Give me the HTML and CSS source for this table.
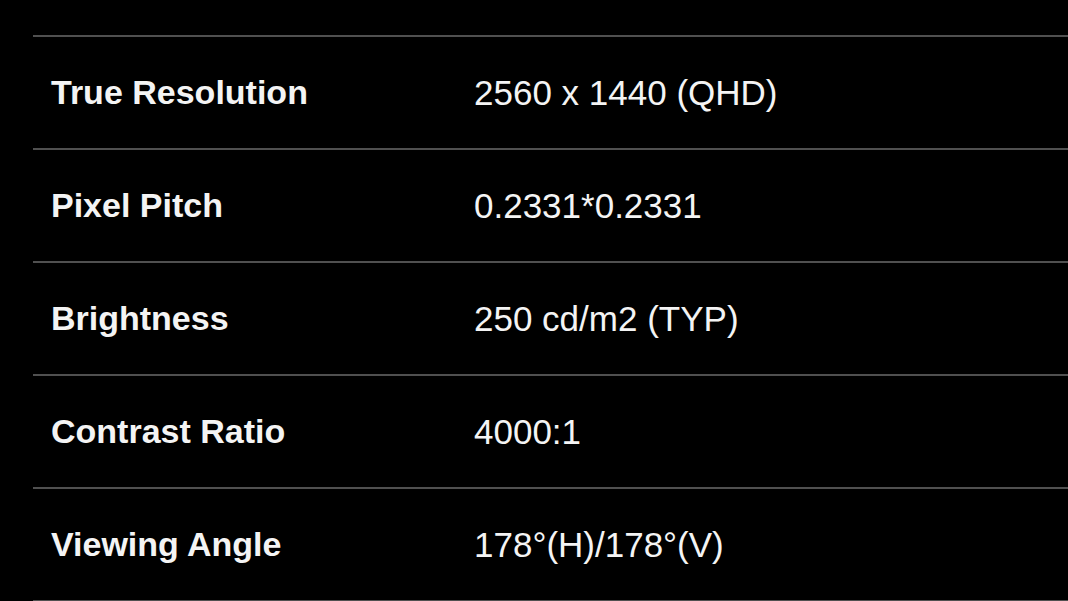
FILE: index.html
```html
<!DOCTYPE html>
<html lang="en">
<head>
<meta charset="utf-8">
<title>Specifications</title>
<link rel="stylesheet" href="styles.css">
</head>
<body>
<div class="specs">
  <div class="row"><div class="label">True Resolution</div><div class="value">2560 x 1440 (QHD)</div></div>
  <div class="row"><div class="label">Pixel Pitch</div><div class="value">0.2331*0.2331</div></div>
  <div class="row"><div class="label">Brightness</div><div class="value">250 cd/m2 (TYP)</div></div>
  <div class="row"><div class="label">Contrast Ratio</div><div class="value">4000:1</div></div>
  <div class="row"><div class="label">Viewing Angle</div><div class="value">178°(H)/178°(V)</div></div>
  <div class="row end"></div>
</div>
</body>
</html>
```
FILE: styles.css
```css
html, body {
  margin: 0;
  padding: 0;
  background: #000;
  overflow: hidden;
}
body {
  width: 1068px;
  height: 601px;
  font-family: "Liberation Sans", Arial, sans-serif;
  color: #f4f4f4;
}
.specs {
  padding-top: 35px;
  margin-left: 33px;
  display: flex;
  flex-direction: column;
}
.row {
  height: 111px;
  border-top: 2px solid #505050;
  display: flex;
  align-items: center;
}
.row.end {
  height: 0;
}
.label {
  width: 423px;
  padding-left: 18px;
  font-weight: bold;
  font-size: 34px;
}
.value {
  font-size: 35px;
}
```
